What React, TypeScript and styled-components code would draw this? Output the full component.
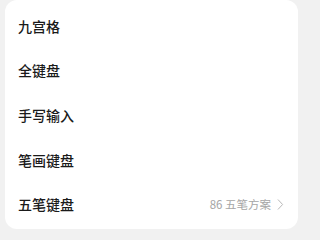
import React from 'react';
import styled, { createGlobalStyle } from 'styled-components';

const GlobalStyle = createGlobalStyle`
  html, body {
    margin: 0;
    padding: 0;
    background: #f1f1f1;
  }
  body {
    font-family: 'Noto Sans CJK SC', 'Noto Sans', sans-serif;
  }
`;

const Page = styled.div`
  width: 309px;
  height: 237px;
  overflow: hidden;
  background: #f1f1f1;
  padding: 0 11px 0 5px;
  box-sizing: border-box;
`;

const Card = styled.div`
  background: #ffffff;
  border-radius: 12px;
  padding: 3.4px 0 2.5px;
`;

const Row = styled.div`
  height: 44.65px;
  display: flex;
  align-items: center;
  justify-content: space-between;
  padding: 0 14px 0 13px;
  box-sizing: border-box;
`;

const Label = styled.span`
  font-size: 14px;
  font-weight: 500;
  line-height: 1;
  color: #1a1a1a;
`;

const Extra = styled.span`
  display: flex;
  align-items: center;
  gap: 6px;
  font-size: 11.5px;
  line-height: 1;
  color: #a6a6a6;
`;

const Chevron = () => (
  <svg width="7" height="11" viewBox="0 0 7 11" fill="none">
    <path d="M1.2 0.8L5.6 5.5L1.2 10.2" stroke="#b8b8b8" strokeWidth="1" strokeLinecap="round" strokeLinejoin="round" />
  </svg>
);

const items = ['九宫格', '全键盘', '手写输入', '笔画键盘'];

export default function App() {
  return (
    <>
      <GlobalStyle />
      <Page>
        <Card>
          {items.map((name) => (
            <Row key={name}>
              <Label>{name}</Label>
            </Row>
          ))}
          <Row>
            <Label>五笔键盘</Label>
            <Extra>
              86 五笔方案
              <Chevron />
            </Extra>
          </Row>
        </Card>
      </Page>
    </>
  );
}
